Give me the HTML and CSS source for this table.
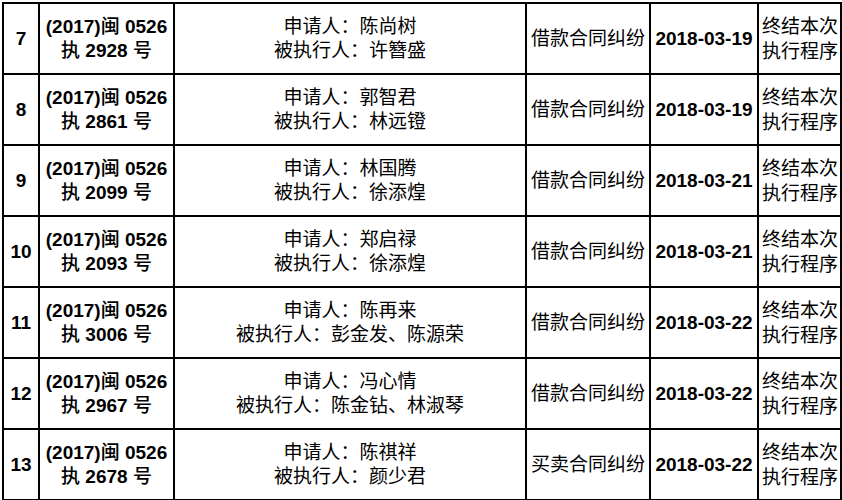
FILE: index.html
```html
<!DOCTYPE html>
<html lang="zh-CN">
<head>
<meta charset="utf-8">
<title>执行案件列表</title>
<link rel="stylesheet" href="styles.css">
</head>
<body>
<table class="cases">
<colgroup>
<col class="c-no"><col class="c-case"><col class="c-party"><col class="c-type"><col class="c-date"><col class="c-result">
</colgroup>
<tbody>
<tr>
<td class="no">7</td>
<td class="case">(2017)<span class="cjk">闽</span> 0526<br><span class="cjk">执</span> 2928 <span class="cjk">号</span></td>
<td class="party">申请人：陈尚树<br>被执行人：许簪盛</td>
<td class="type">借款合同纠纷</td>
<td class="date">2018-03-19</td>
<td class="result">终结本次执行程序</td>
</tr>
<tr>
<td class="no">8</td>
<td class="case">(2017)<span class="cjk">闽</span> 0526<br><span class="cjk">执</span> 2861 <span class="cjk">号</span></td>
<td class="party">申请人：郭智君<br>被执行人：林远镫</td>
<td class="type">借款合同纠纷</td>
<td class="date">2018-03-19</td>
<td class="result">终结本次执行程序</td>
</tr>
<tr>
<td class="no">9</td>
<td class="case">(2017)<span class="cjk">闽</span> 0526<br><span class="cjk">执</span> 2099 <span class="cjk">号</span></td>
<td class="party">申请人：林国腾<br>被执行人：徐添煌</td>
<td class="type">借款合同纠纷</td>
<td class="date">2018-03-21</td>
<td class="result">终结本次执行程序</td>
</tr>
<tr>
<td class="no">10</td>
<td class="case">(2017)<span class="cjk">闽</span> 0526<br><span class="cjk">执</span> 2093 <span class="cjk">号</span></td>
<td class="party">申请人：郑启禄<br>被执行人：徐添煌</td>
<td class="type">借款合同纠纷</td>
<td class="date">2018-03-21</td>
<td class="result">终结本次执行程序</td>
</tr>
<tr>
<td class="no">11</td>
<td class="case">(2017)<span class="cjk">闽</span> 0526<br><span class="cjk">执</span> 3006 <span class="cjk">号</span></td>
<td class="party">申请人：陈再来<br>被执行人：彭金发、陈源荣</td>
<td class="type">借款合同纠纷</td>
<td class="date">2018-03-22</td>
<td class="result">终结本次执行程序</td>
</tr>
<tr>
<td class="no">12</td>
<td class="case">(2017)<span class="cjk">闽</span> 0526<br><span class="cjk">执</span> 2967 <span class="cjk">号</span></td>
<td class="party">申请人：冯心情<br>被执行人：陈金钻、林淑琴</td>
<td class="type">借款合同纠纷</td>
<td class="date">2018-03-22</td>
<td class="result">终结本次执行程序</td>
</tr>
<tr>
<td class="no">13</td>
<td class="case">(2017)<span class="cjk">闽</span> 0526<br><span class="cjk">执</span> 2678 <span class="cjk">号</span></td>
<td class="party">申请人：陈祺祥<br>被执行人：颜少君</td>
<td class="type">买卖合同纠纷</td>
<td class="date">2018-03-22</td>
<td class="result">终结本次执行程序</td>
</tr>
</tbody>
</table>
</body>
</html>
```

FILE: styles.css
```css
html, body {
  margin: 0;
  padding: 0;
  background: #ffffff;
}

body {
  font-family: "Liberation Sans", "Noto Sans CJK SC", sans-serif;
  font-size: 19px;
  color: #000000;
}

.cases {
  margin: 2px 0 0 2px;
  border-collapse: collapse;
  table-layout: fixed;
  width: 840px;
}

.c-no { width: 36px; }
.c-case { width: 135px; }
.c-party { width: 352px; }
.c-type { width: 124px; }
.c-date { width: 108px; }
.c-result { width: 83px; }

.cases td {
  border: 2px solid #000000;
  height: 69px;
  padding: 0 1px;
  line-height: 24px;
  text-align: center;
  vertical-align: middle;
  overflow: hidden;
}

.cases .no,
.cases .case,
.cases .date {
  font-weight: bold;
}

.cases .cjk {
  font-weight: 500;
}

.cases .party,
.cases .type {
  font-weight: normal;
}

.cases .result {
  text-align: left;
  padding: 0 0 0 3px;
  line-height: 25px;
}
```
